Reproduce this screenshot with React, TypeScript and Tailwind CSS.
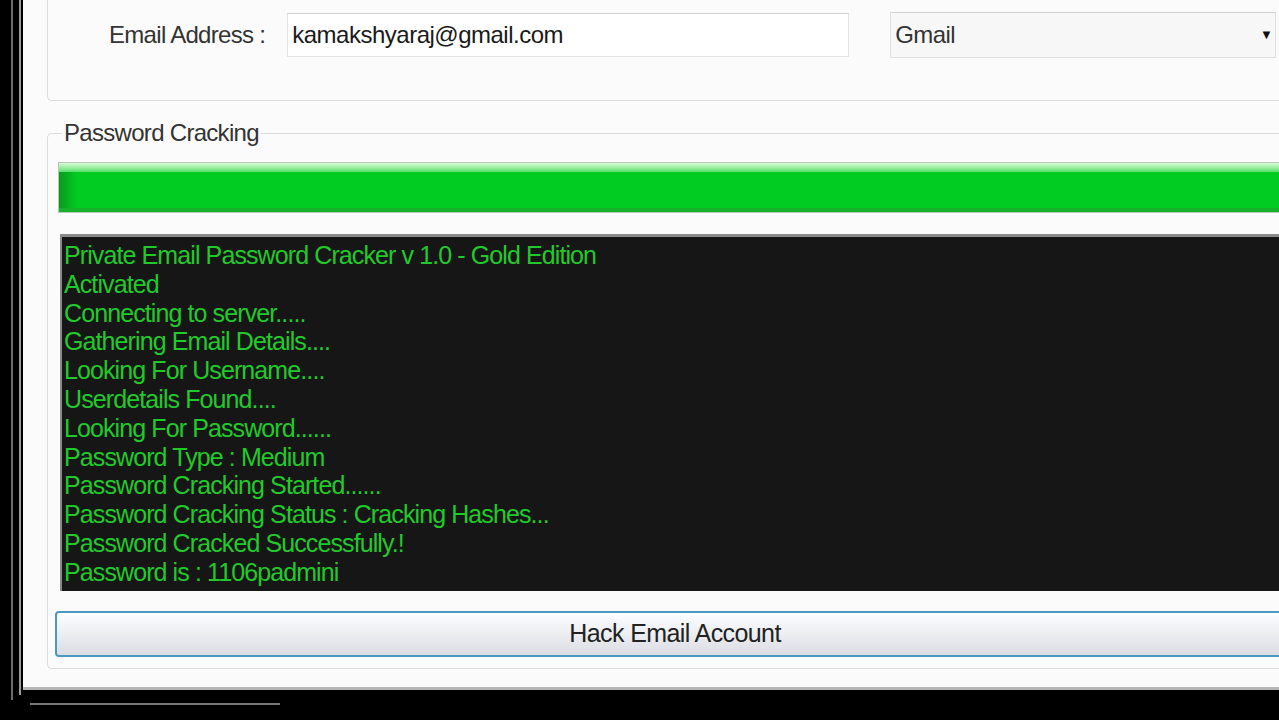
const consoleLines = [
  'Private Email Password Cracker v 1.0 - Gold Edition',
  'Activated',
  'Connecting to server.....',
  'Gathering Email Details....',
  'Looking For Username....',
  'Userdetails Found....',
  'Looking For Password......',
  'Password Type : Medium',
  'Password Cracking Started......',
  'Password Cracking Status : Cracking Hashes...',
  'Password Cracked Successfully.!',
  'Password is : 1106padmini',
];

export default function App() {
  return (
    <div
      className="w-[1279px] h-[720px] overflow-hidden bg-black flex items-start"
      style={{ fontFamily: '"Liberation Sans", Arial, sans-serif' }}
    >
      {/* window frame on the left */}
      <div className="shrink-0 ml-[11px] w-[2px] h-[700px] bg-[#6b6b6b]" />
      <div className="shrink-0 ml-[6px] w-[2px] h-[695px] bg-[#9a9a9a]" />

      <div className="shrink-0 ml-[2px] flex flex-col">
        {/* form body */}
        <div className="w-[1320px] h-[690px] bg-[#fbfbfb] border-b-[3px] border-[#b5b5b5] flex flex-col">
          {/* top group box */}
          <div className="ml-[24px] h-[101px] shrink-0 border-l border-b border-[#dcdcdc] rounded-bl-[5px] pt-[12px] pl-[61px] flex items-start">
            <div className="h-[46px] flex items-center text-[24px] tracking-[-0.7px] text-[#333]">
              Email Address :
            </div>
            <div className="ml-[22px] mt-[1px] w-[562px] h-[44px] bg-white border border-[#e3e3e3] border-t-[#cfcfcf] px-[4px] flex items-center text-[24px] tracking-[-0.5px] text-[#1a1a1a]">
              kamakshyaraj@gmail.com
            </div>
            <div className="ml-[41px] w-[386px] h-[46px] bg-[#f7f7f7] border border-[#e0e0e0] border-t-[#d2d2d2] pl-[4px] pr-[3px] flex items-center justify-between text-[24px] tracking-[-0.6px] text-[#333]">
              <span>Gmail</span>
              <span className="text-[13px] text-[#111]">▼</span>
            </div>
          </div>

          {/* password cracking group */}
          <fieldset className="ml-[24px] mt-[18px] border-l border-t border-b border-[#dcdcdc] rounded-l-[5px] pl-[10px] pb-[11px] flex flex-col items-start">
            <legend className="ml-[4px] px-[2px] text-[24px] leading-[28px] tracking-[-0.7px] text-[#333]">
              Password Cracking
            </legend>

            {/* progress bar */}
            <div className="mt-[15px] w-[1290px] h-[51px] border border-[#b8c8b8] bg-[#00cc22] flex flex-col">
              <div className="h-[9px] bg-gradient-to-b from-[#d8fbd8] to-[#4fe06a]" />
              <div className="flex-1 flex">
                <div className="w-[18px] bg-gradient-to-r from-[#0a9a1c] to-[#00cc22]" />
              </div>
              <div className="h-[4px] bg-[#16b02a]" />
            </div>

            {/* console */}
            <div className="mt-[21px] ml-[2px] w-[1290px] h-[357px] bg-[#161616] border-t-[3px] border-l-[2px] border-[#8a8a8a] pl-[2px] pt-[4px]">
              {consoleLines.map((line) => (
                <div
                  key={line}
                  className="text-[25px] leading-[28.8px] tracking-[-0.9px] text-[#22c92b] whitespace-pre"
                >
                  {line}
                </div>
              ))}
            </div>

            {/* button */}
            <button className="mt-[20px] -ml-[3px] w-[1240px] h-[46px] rounded-[4px] border-2 border-[#4a98c4] bg-gradient-to-b from-[#fbfdff] via-[#eceef2] to-[#dcdce4] flex items-center justify-center text-[25px] tracking-[-0.6px] text-[#222]">
              Hack Email Account
            </button>
          </fieldset>
        </div>

        {/* bottom frame line */}
        <div className="ml-[7px] mt-[13px] w-[250px] h-[2px] bg-[#777]" />
      </div>
    </div>
  );
}
